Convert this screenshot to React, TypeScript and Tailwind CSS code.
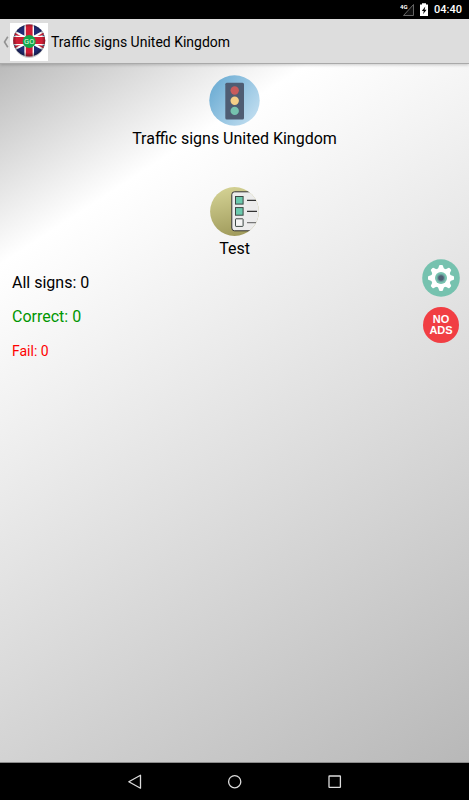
import type { ReactNode } from "react";

const stats = [
  { name: "All signs", value: 0, className: "text-base leading-6 text-black" },
  { name: "Correct", value: 0, className: "text-base leading-6 text-[#009600]" },
  { name: "Fail", value: 0, className: "text-sm leading-6 text-[#ff0000]" },
];

function FlagLogo() {
  return (
    <svg width="38" height="38" viewBox="0 0 38 38" className="shrink-0">
      <defs>
        <clipPath id="flag">
          <circle cx="19.2" cy="17.5" r="16" />
        </clipPath>
        <radialGradient id="gloss" cx="0.5" cy="0.48" r="0.5">
          <stop offset="0.8" stopColor="#000" stopOpacity="0" />
          <stop offset="1" stopColor="#000" stopOpacity="0.35" />
        </radialGradient>
      </defs>
      <rect width="38" height="38" fill="#fff" />
      <ellipse cx="19.2" cy="19" rx="15.5" ry="16" fill="#cfcfcf" />
      <g clipPath="url(#flag)">
        <rect width="38" height="38" fill="#212c74" />
        <path d="M-3 5.5 L41 29.5 M-3 29.5 L41 5.5" stroke="#fff" strokeWidth="4" />
        <path d="M-3 6.5 L19 18.5 M41 28.5 L19 16.5 M-3 28.5 L19 16.5 M41 6.5 L19 18.5" stroke="#d21f35" strokeWidth="1.6" />
        <path d="M19.2 0V38M0 17.5H38" stroke="#fff" strokeWidth="9.6" />
        <path d="M19.2 0V38M0 17.5H38" stroke="#cf1f36" strokeWidth="6.8" />
      </g>
      <circle cx="19.2" cy="17.5" r="16" fill="url(#gloss)" />
      <circle cx="19.2" cy="18.5" r="6.5" fill="#12a84c" />
      <text x="19.2" y="21.3" textAnchor="middle" fontSize="7.5" fill="#e2fbea" fontFamily="Roboto, sans-serif">
        GO
      </text>
    </svg>
  );
}

function TrafficLight() {
  return (
    <svg width="51" height="51" viewBox="0 0 51 51">
      <defs>
        <linearGradient id="sky" x1="0" y1="0.2" x2="1" y2="0.9">
          <stop offset="0.1" stopColor="#74b1d6" />
          <stop offset="1" stopColor="#c6e1f2" />
        </linearGradient>
      </defs>
      <circle cx="25.5" cy="25.5" r="25.2" fill="url(#sky)" />
      <rect x="16.3" y="7.8" width="18.7" height="36.8" rx="1.5" fill="#4f5d73" />
      <circle cx="25.7" cy="15.5" r="4.2" fill="#c75c5c" />
      <circle cx="25.7" cy="25.7" r="4.2" fill="#f5cf87" />
      <circle cx="25.7" cy="35.9" r="4.2" fill="#76c2af" />
    </svg>
  );
}

function Checklist() {
  return (
    <svg width="49" height="49" viewBox="0 0 49 49">
      <defs>
        <linearGradient id="olive" x1="0.3" y1="0" x2="0.5" y2="1">
          <stop offset="0" stopColor="#d4d294" />
          <stop offset="1" stopColor="#a09b5c" />
        </linearGradient>
        <clipPath id="round">
          <circle cx="24.5" cy="24.5" r="24.4" />
        </clipPath>
      </defs>
      <g clipPath="url(#round)">
        <rect width="49" height="49" fill="url(#olive)" />
        <path d="M52 4.8H24.5Q21.8 4.8 21.8 7.5V41Q21.8 43.8 24.5 43.8H52" fill="#ececec" stroke="#333" strokeWidth="1" />
        <g stroke="#3c4743" strokeWidth="1">
          <rect x="25.5" y="9.5" width="7.6" height="7.6" fill="#6bc9ad" />
          <rect x="25.5" y="20.6" width="7.6" height="7.6" fill="#6bc9ad" />
          <rect x="25.5" y="31.8" width="7.6" height="7.6" rx="0.5" fill="#f4f4f4" />
        </g>
        <path d="M37 13.3h9M37 24.4h10" stroke="#333" strokeWidth="1.2" />
        <path d="M37 35.6h9" stroke="#777" strokeWidth="1.2" />
      </g>
    </svg>
  );
}

function Gear() {
  return (
    <svg width="38" height="38" viewBox="0 0 38 38">
      <circle cx="19" cy="19" r="18.8" fill="#76c2af" />
      <g fill="#fff">
        <circle cx="19" cy="19" r="10" />
        {[0, 45, 90, 135, 180, 225, 270, 315].map((angle) => (
          <path
            key={angle}
            d="M15.6 11 L17 6.9 Q17.2 6 18 6 H20 Q20.8 6 21 6.9 L22.4 11 Z"
            transform={`rotate(${angle} 19 19)`}
          />
        ))}
      </g>
      <circle cx="19" cy="19" r="6" fill="#76c2af" />
      <circle cx="19" cy="19" r="4" fill="#6a9c9c" />
      <circle cx="19" cy="19" r="2.8" fill="#4f5d73" />
    </svg>
  );
}

function StatusBar() {
  return (
    <div className="flex h-[19px] shrink-0 items-center justify-end bg-black pr-[7px] text-white">
      <svg width="32" height="15" viewBox="0 0 32 15">
        <path d="M13.5 2.5V13.5H3.5Z" fill="#111" stroke="#666" strokeWidth="1" />
        <text x="0" y="6.5" fontSize="6" fontWeight="700" fill="#fff" fontFamily="Roboto, sans-serif">
          4G
        </text>
        <path d="M20 2.5h2V1.2h4v1.3h2V14h-8Z" fill="#fff" />
        <path d="M25.3 4.5L21.8 9h2l-.8 3.2L26.6 7.8h-2Z" fill="#000" />
      </svg>
      <span className="ml-0.5 text-[11px] leading-4 font-medium">04:40</span>
    </div>
  );
}

function MenuButton({ icon, label }: { icon: ReactNode; label: string }) {
  return (
    <button className="flex cursor-pointer flex-col items-center gap-[3px]">
      {icon}
      <span className="text-base leading-5">{label}</span>
    </button>
  );
}

function NavBar() {
  return (
    <nav className="flex h-[37px] shrink-0 justify-center bg-black text-[#dcdcdc]">
      <button aria-label="Back" className="flex w-25 items-center justify-center">
        <svg width="16" height="16" viewBox="0 0 16 16" fill="none" stroke="currentColor" strokeWidth="1.3">
          <path d="M13.5 1.2V14.2L1.8 7.7Z" strokeLinejoin="round" />
        </svg>
      </button>
      <button aria-label="Home" className="flex w-25 items-center justify-center">
        <svg width="16" height="16" viewBox="0 0 16 16" fill="none" stroke="currentColor" strokeWidth="1.3">
          <circle cx="7.7" cy="7.7" r="6.1" />
        </svg>
      </button>
      <button aria-label="Recent" className="flex w-25 items-center justify-center">
        <svg width="16" height="16" viewBox="0 0 16 16" fill="none" stroke="currentColor" strokeWidth="1.3">
          <rect x="2" y="2" width="11.4" height="11.4" rx="0.5" />
        </svg>
      </button>
    </nav>
  );
}

function App() {
  return (
    <div className="flex min-h-screen flex-col font-[Roboto,sans-serif] text-black">
      <StatusBar />

      {/* title bar */}
      <header className="z-10 flex h-[45px] shrink-0 items-center border-b border-[#a9a9a9] bg-[#dddddd] pt-0.5 shadow-[0_1px_3px_rgba(0,0,0,0.2)]">
        <button aria-label="Navigate up" className="flex h-full cursor-pointer items-center">
          <svg width="10" height="14" viewBox="0 0 10 14" fill="none" stroke="#929292" strokeWidth="1.6">
            <path d="M7.8 1.8 L4.5 7 L7.8 12.2" />
          </svg>
          <FlagLogo />
        </button>
        <h1 className="ml-[3px] text-sm">Traffic signs United Kingdom</h1>
      </header>

      <main className="flex grow flex-col border-b border-[#8c8c8c] bg-[linear-gradient(147deg,#bababa_0%,#ffffff_20%,#b8b8b8_100%)] pt-[11px]">
        <div className="flex flex-col items-center gap-[38px]">
          <MenuButton icon={<TrafficLight />} label="Traffic signs United Kingdom" />
          <MenuButton icon={<Checklist />} label="Test" />
        </div>

        {/* results and side buttons */}
        <div className="flex justify-between pr-[9px] pl-3">
          <div className="flex flex-col gap-2.5 pt-3">
            {stats.map((stat) => (
              <p key={stat.name} className={stat.className}>
                {stat.name}: {stat.value}
              </p>
            ))}
          </div>
          <div className="flex flex-col items-center gap-2.5">
            <button aria-label="Settings" className="cursor-pointer">
              <Gear />
            </button>
            <button className="flex size-9 cursor-pointer items-center justify-center rounded-full bg-[#f13e43] font-['Liberation_Sans',sans-serif] text-[11px] leading-[11px] font-bold text-white">
              NO
              <br />
              ADS
            </button>
          </div>
        </div>
      </main>

      <NavBar />
    </div>
  );
}

export default App;
